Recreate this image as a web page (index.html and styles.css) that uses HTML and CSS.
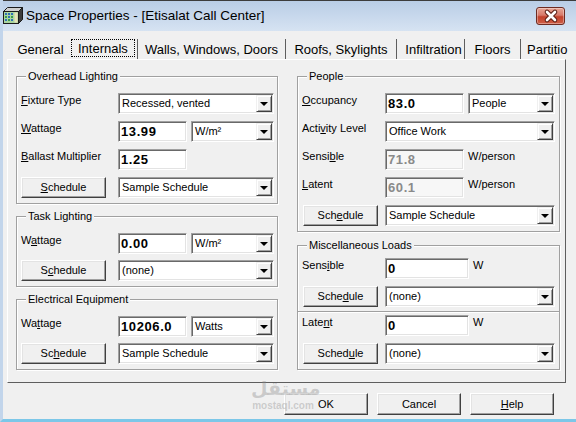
FILE: index.html
```html
<!DOCTYPE html>
<html>
<head>
	<meta charset="utf-8">
	<meta name="viewport" content="width=device-width, initial-scale=1">
	<title>Space Properties</title>
	<link rel="stylesheet" href="styles.css">
</head>
<body>

<div class="window">

  <div class="titlebar">
    <svg class="app-icon" width="20" height="17" viewBox="0 0 20 17">
      <polygon points="0.5,4.5 4.5,0.5 19.5,0.5 15.5,4.5" fill="#cfcfcf" stroke="#1b1b1b"/>
      <polygon points="15.5,4.5 19.5,0.5 19.5,12.5 15.5,16.5" fill="#3d3d3d" stroke="#1b1b1b"/>
      <rect x="0.5" y="4.5" width="15" height="12" fill="#a9d6a0" stroke="#1b1b1b"/>
      <rect x="2" y="6" width="2" height="2" fill="#2f6fb8"/>
      <rect x="5" y="6" width="2" height="2" fill="#2f6fb8"/>
      <rect x="8" y="6" width="2" height="2" fill="#2f6fb8"/>
      <rect x="2" y="9" width="2" height="2" fill="#3a9a4a"/>
      <rect x="5" y="9" width="2" height="2" fill="#2f6fb8"/>
      <rect x="8" y="9" width="2" height="2" fill="#3a9a4a"/>
      <rect x="2" y="12" width="2" height="2" fill="#2f6fb8"/>
      <rect x="5" y="12" width="2" height="2" fill="#3a9a4a"/>
      <rect x="8" y="12" width="2" height="2" fill="#2f6fb8"/>
      <rect x="11.5" y="5.5" width="3" height="10" fill="#e8e2b8"/>
    </svg>
    <span class="caption">Space Properties - [Etisalat Call Center]</span>
    <span class="close-btn">
      <svg width="27" height="16" viewBox="0 0 27 16">
        <path d="M10 4 L18 12 M18 4 L10 12" stroke="#5a1d14" stroke-width="4.6" stroke-linecap="round"/>
        <path d="M10 4 L18 12 M18 4 L10 12" stroke="#fff" stroke-width="2.6" stroke-linecap="round"/>
      </svg>
    </span>
  </div>

  <!-- tab strip -->
  <div class="tabs">
    <span class="tab t-general">General</span>
    <span class="tab t-internals sep"><span class="focus">Internals</span></span>
    <span class="tab t-walls sep">Walls, Windows, Doors</span>
    <span class="tab t-roofs sep">Roofs, Skylights</span>
    <span class="tab t-infil sep">Infiltration</span>
    <span class="tab t-floors sep">Floors</span>
    <span class="tab t-part">Partitio</span>
  </div>

  <div class="page">

    <div class="col left">

      <fieldset class="group g-overhead">
        <legend>Overhead Lighting</legend>
        <div class="row">
          <label><u>F</u>ixture Type</label>
          <div class="combo c-wide"><span class="value">Recessed, vented</span><span class="drop"></span></div>
        </div>
        <div class="row">
          <label><u>W</u>attage</label>
          <div class="edit e-num">13.99</div>
          <div class="combo c-unit"><span class="value">W/m²</span><span class="drop"></span></div>
        </div>
        <div class="row">
          <label><u>B</u>allast Multiplier</label>
          <div class="edit e-num">1.25</div>
        </div>
        <div class="row">
          <div class="btn sched"><u>S</u>chedule</div>
          <div class="combo c-wide"><span class="value">Sample Schedule</span><span class="drop"></span></div>
        </div>
      </fieldset>

      <fieldset class="group tight">
        <legend>Task Lighting</legend>
        <div class="row">
          <label>W<u>a</u>ttage</label>
          <div class="edit e-num">0.00</div>
          <div class="combo c-unit"><span class="value">W/m²</span><span class="drop"></span></div>
        </div>
        <div class="row">
          <div class="btn sched">S<u>c</u>hedule</div>
          <div class="combo c-wide"><span class="value">(none)</span><span class="drop"></span></div>
        </div>
      </fieldset>

      <fieldset class="group tight">
        <legend>Electrical Equipment</legend>
        <div class="row">
          <label>Wa<u>t</u>tage</label>
          <div class="edit e-num">10206.0</div>
          <div class="combo c-unit"><span class="value">Watts</span><span class="drop"></span></div>
        </div>
        <div class="row">
          <div class="btn sched">Sc<u>h</u>edule</div>
          <div class="combo c-wide"><span class="value">Sample Schedule</span><span class="drop"></span></div>
        </div>
      </fieldset>

    </div>

    <div class="col right">

      <fieldset class="group">
        <legend>People</legend>
        <div class="row">
          <label><u>O</u>ccupancy</label>
          <div class="edit e-num">83.0</div>
          <div class="combo c-unit"><span class="value">People</span><span class="drop"></span></div>
        </div>
        <div class="row">
          <label>Acti<u>v</u>ity Level</label>
          <div class="combo c-wide"><span class="value">Office Work</span><span class="drop"></span></div>
        </div>
        <div class="row">
          <label>Sensi<u>b</u>le</label>
          <div class="edit e-num disabled">71.8</div>
          <span class="unit">W/person</span>
        </div>
        <div class="row">
          <label><u>L</u>atent</label>
          <div class="edit e-num disabled">60.1</div>
          <span class="unit">W/person</span>
        </div>
        <div class="row">
          <div class="btn sched">Sch<u>e</u>dule</div>
          <div class="combo c-wide"><span class="value">Sample Schedule</span><span class="drop"></span></div>
        </div>
      </fieldset>

      <fieldset class="group misc">
        <legend>Miscellaneous Loads</legend>
        <div class="row">
          <label>Sens<u>i</u>ble</label>
          <div class="edit e-num e-misc">0</div>
          <span class="unit">W</span>
        </div>
        <div class="row">
          <div class="btn sched">Sche<u>d</u>ule</div>
          <div class="combo c-wide"><span class="value">(none)</span><span class="drop"></span></div>
        </div>
        <div class="divider"></div>
        <div class="row">
          <label>Late<u>n</u>t</label>
          <div class="edit e-num e-misc">0</div>
          <span class="unit">W</span>
        </div>
        <div class="row">
          <div class="btn sched">Sched<u>u</u>le</div>
          <div class="combo c-wide"><span class="value">(none)</span><span class="drop"></span></div>
        </div>
      </fieldset>

    </div>
  </div>

  <div class="actions">
    <div class="btn action">OK</div>
    <div class="btn action">Cancel</div>
    <div class="btn action"><u>H</u>elp</div>
  </div>

  <div class="stamp">
    <div class="stamp-ar">مستقل</div>
    <div class="stamp-en">mostaql.com</div>
  </div>

</div>

</body>
</html>
```

FILE: styles.css
```css
* {
  box-sizing: border-box;
}

body {
  margin: 0;
  width: 576px;
  height: 422px;
  overflow: hidden;
  background: #f0f0f0;
  font-family: "Liberation Sans", Arial, sans-serif;
  font-size: 11px;
  color: #000;
}

.window {
  position: relative;
  display: flex;
  flex-direction: column;
  height: 422px;
  background: #f0f0f0;
  border-left: 3px solid #c2d5eb;
  border-bottom: 3px solid #7cc7e8;
}

/* ~~~~~~~~ title bar ~~~~~~~~ */
.titlebar {
  display: flex;
  align-items: flex-start;
  height: 31px;
  flex: none;
  border-top: 1px solid #3c3c3c;
  background: linear-gradient(#b9cde6, #d6e3f2);
}

.app-icon {
  margin-top: 6px;
  flex: none;
}

.caption {
  margin: 7px 0 0 3px;
  font-size: 13.5px;
  line-height: 16px;
  color: #000;
  white-space: nowrap;
}

.close-btn {
  margin: 6px 11px 0 auto;
  width: 29px;
  height: 18px;
  border: 1px solid #6e2b22;
  border-radius: 3px;
  background: linear-gradient(#e7a696 0%, #d7796a 45%, #c2412c 55%, #cf5f47 100%);
  box-shadow: inset 0 0 0 1px rgba(255, 255, 255, 0.35);
}

.close-btn svg {
  display: block;
}

/* ~~~~~~~~ tabs ~~~~~~~~ */
.tabs {
  display: flex;
  flex: none;
  width: 558px;
  height: 20px;
  margin: 8px 0 0 7px;
  overflow: hidden;
  white-space: nowrap;
  font-size: 13px;
}

.tab {
  flex: none;
  height: 20px;
  padding-top: 2px;
  line-height: 18px;
  text-align: center;
}

.tab.sep {
  border-right: 1px solid #5e5e5e;
}

.t-general { width: 61px; }
.t-internals { width: 67px; padding-top: 0; text-align: left; }
.t-walls { width: 148px; }
.t-roofs { width: 111px; }
.t-infil { width: 68px; padding-left: 6px; }
.t-floors { width: 56px; }
.t-part { padding-left: 6px; }

.focus {
  display: inline-block;
  height: 18px;
  padding: 1px 6px 0;
  line-height: 16px;
  border: 1px dotted #000;
}

/* ~~~~~~~~ tab page ~~~~~~~~ */
.page {
  display: flex;
  gap: 19px;
  flex: none;
  width: 559px;
  height: 324px;
  margin-left: 4px;
  padding: 10px 5px 0 8px;
  border: 1px solid;
  border-color: #fff #5e5e5e #5e5e5e #fff;
  background: #f0f0f0;
}

.col {
  display: flex;
  flex-direction: column;
}

.col.left { width: 262px; }
.col.right { width: 263px; }

.group {
  margin: 0;
  min-width: 0;
  padding: 10px 3px 5px 4px;
  border: 1px solid #a0a0a0;
  box-shadow: inset 1px 1px #fff, 1px 1px #fff;
}

.col.right .group {
  padding-right: 4px;
}

.group + .group {
  margin-top: 6px;
}

.col.right .group + .group {
  margin-top: 7px;
}

.group legend {
  margin-left: 5px;
  padding: 0 2px;
  line-height: 13px;
  font-size: 11px;
  background: #f0f0f0;
}

.group.misc {
  padding-top: 6px;
}

.row {
  display: flex;
  align-items: flex-start;
  height: 21px;
}

.row + .row {
  margin-top: 7px;
}

.tight .row + .row {
  margin-top: 6px;
}

.row label {
  flex: none;
  padding-top: 1px;
  line-height: 13px;
}

.left label { width: 97px; }
.right label { width: 83px; }

.divider {
  height: 2px;
  margin: 4px -4px 2px;
  border-top: 1px solid #a0a0a0;
  border-bottom: 1px solid #fff;
}

.divider + .row {
  margin-top: 0;
}

.unit {
  margin-left: 4px;
  padding-top: 1px;
  line-height: 13px;
}

/* ~~~~~~~~ controls ~~~~~~~~ */
.edit,
.combo {
  flex: none;
  height: 21px;
  border: 1px solid;
  border-color: #a0a0a0 #fff #fff #a0a0a0;
  box-shadow: inset 1px 1px #696969, inset -1px -1px #e3e3e3;
  background: #fff;
}

.edit {
  padding: 2px 0 0 2px;
  font-size: 13px;
  font-weight: bold;
  line-height: 15px;
  letter-spacing: 0.6px;
  white-space: nowrap;
  overflow: hidden;
}

.edit.disabled {
  color: #8a8a8a;
  background: #f7f7f7;
}

.left .e-num { width: 69px; }
.right .e-num { width: 79px; }
.right .e-misc { width: 84px; }

.combo {
  display: flex;
  padding: 1px;
}

.combo .value {
  flex: 1;
  padding-left: 2px;
  line-height: 17px;
  white-space: nowrap;
  overflow: hidden;
}

.left .combo.c-wide { width: 156px; }
.left .combo.c-unit { width: 83px; margin-left: 4px; }
.right .combo.c-wide { width: 170px; }
.right .combo.c-unit { width: 87px; margin-left: 4px; }

.drop {
  position: relative;
  flex: none;
  width: 16px;
  height: 17px;
  border: 1px solid;
  border-color: #f0f0f0 #404040 #404040 #f0f0f0;
  box-shadow: inset 1px 1px #fff, inset -1px -1px #a0a0a0;
  background: #f0f0f0;
}

.drop::after {
  content: "";
  position: absolute;
  left: 3px;
  top: 6px;
  border-top: 4px solid #000;
  border-left: 4px solid transparent;
  border-right: 4px solid transparent;
}

.btn {
  flex: none;
  height: 21px;
  line-height: 19px;
  text-align: center;
  border: 1px solid;
  border-color: #fff #404040 #404040 #fff;
  box-shadow: inset -1px -1px #a0a0a0, inset 1px 1px #e3e3e3;
  background: #f0f0f0;
}

.left .sched {
  width: 85px;
  margin-right: 12px;
}

.right .sched {
  width: 75px;
  margin: 0 7px 0 1px;
}

/* ~~~~~~~~ dialog buttons ~~~~~~~~ */
.actions {
  display: flex;
  justify-content: flex-end;
  gap: 9px;
  margin-top: 10px;
  padding-right: 22px;
}

.btn.action {
  width: 84px;
  height: 22px;
  line-height: 20px;
}

/* faint site stamp */
.stamp {
  position: absolute;
  left: 248px;
  top: 376px;
  width: 64px;
  text-align: center;
  color: rgba(140, 140, 140, 0.38);
  font-weight: bold;
  pointer-events: none;
}

.stamp-ar {
  font-family: "DejaVu Sans", sans-serif;
  font-size: 19px;
  line-height: 24px;
}

.stamp-en {
  font-size: 10px;
  line-height: 12px;
}
```
